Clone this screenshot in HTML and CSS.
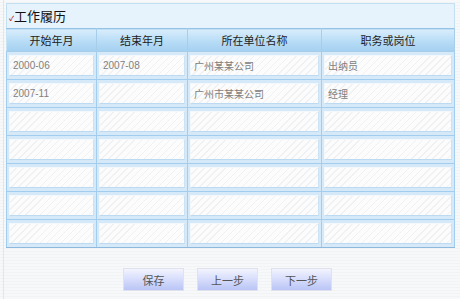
FILE: index.html
```html
<!DOCTYPE html>
<html lang="zh-CN">
<head>
    <meta charset="UTF-8">
    <title>工作履历</title>
    <link rel="stylesheet" href="styles.css">
</head>
<body>

<div class="page">
    <div class="panel">
        <div class="title"><span class="tick">&#10003;</span>工作履历</div>
        <table class="grid">
            <thead>
                <tr>
                    <th class="c1">开始年月</th>
                    <th class="c2">结束年月</th>
                    <th class="c3">所在单位名称</th>
                    <th class="c4">职务或岗位</th>
                </tr>
            </thead>
            <tbody>
                <tr>
                    <td><input type="text" value="2000-06"></td>
                    <td><input type="text" value="2007-08"></td>
                    <td><input type="text" value="广州某某公司"></td>
                    <td><input type="text" value="出纳员"></td>
                </tr>
                <tr>
                    <td><input type="text" value="2007-11"></td>
                    <td><input type="text"></td>
                    <td><input type="text" value="广州市某某公司"></td>
                    <td><input type="text" value="经理"></td>
                </tr>
                <tr><td><input type="text"></td><td><input type="text"></td><td><input type="text"></td><td><input type="text"></td></tr>
                <tr><td><input type="text"></td><td><input type="text"></td><td><input type="text"></td><td><input type="text"></td></tr>
                <tr><td><input type="text"></td><td><input type="text"></td><td><input type="text"></td><td><input type="text"></td></tr>
                <tr><td><input type="text"></td><td><input type="text"></td><td><input type="text"></td><td><input type="text"></td></tr>
                <tr><td><input type="text"></td><td><input type="text"></td><td><input type="text"></td><td><input type="text"></td></tr>
            </tbody>
        </table>
    </div>

    <div class="buttons">
        <button type="button">保存</button>
        <button type="button">上一步</button>
        <button type="button">下一步</button>
    </div>
</div>

</body>
</html>
```

FILE: styles.css
```css
body {
    margin: 0;
    font-family: "Liberation Sans", "Noto Sans CJK SC", sans-serif;
    font-size: 11px;
    color: #333;
    background-color: #f5f6f7;
    background-image: repeating-linear-gradient(180deg, #f7f8f9 0, #f7f8f9 2px, #f2f3f4 2px, #f2f3f4 3px);
}

.page {
    height: 299px;
    padding: 3px 5px 0 2px;
    box-sizing: border-box;
    border-left: 1px solid #e3e6e8;
    margin-left: 3px;
}

.panel {
    width: 449px;
    background-color: #fff;
}

.title {
    height: 24px;
    line-height: 25px;
    padding-left: 2px;
    background-color: #e6f3fc;
    border: 1px solid #c3e0f2;
    border-bottom: none;
    font-size: 13px;
    color: #111;
}

.tick {
    color: #c0282d;
    font-size: 7px;
    font-weight: bold;
}

.grid {
    width: 100%;
    border-collapse: collapse;
    table-layout: fixed;
}

.grid th {
    height: 22px;
    padding: 0;
    font-weight: normal;
    font-size: 11px;
    color: #222;
    background: linear-gradient(180deg, #d9edfb 0%, #b7dcf6 55%, #a4d0f1 100%);
    border: 1px solid #a6cdea;
    border-top: 1px solid #94c3e6;
    border-left-color: #c9e3f6;
}

.grid th.c1 { width: 89px; }
.grid th.c2 { width: 90px; }
.grid th.c3 { width: 133px; }

.grid td {
    height: 28px;
    padding: 3px 2px 3px 2px;
    box-sizing: border-box;
    background-color: #d5e9f8;
    border: 1px solid #a3cdee;
}

.grid tr:last-child td {
    border-bottom-color: #8fb9dc;
}

.grid input {
    display: block;
    width: 100%;
    height: 21px;
    box-sizing: border-box;
    margin: 0;
    padding: 0 3px;
    border: 1px solid #f3f8fc;
    border-bottom-color: #bcdaf1;
    border-right-color: #cde3f4;
    background-color: #fcfcfc;
    background-image: repeating-linear-gradient(135deg, #fcfcfc 0, #fcfcfc 4px, #f0f1f3 4px, #f0f1f3 5px);
    font-family: "Liberation Sans", "Noto Sans CJK SC", sans-serif;
    font-size: 10px;
    color: #808080;
    outline: none;
}

.buttons {
    display: flex;
    gap: 13px;
    padding: 20px 0 0 117px;
}

.buttons button {
    width: 61px;
    height: 23px;
    padding: 0;
    font-family: "Liberation Sans", "Noto Sans CJK SC", sans-serif;
    font-size: 11px;
    color: #555;
    background: linear-gradient(180deg, #f3f4ff 0%, #d6dcfb 50%, #bac5f6 100%);
    border: 1px solid #dfe2ec;
    cursor: pointer;
}
```
